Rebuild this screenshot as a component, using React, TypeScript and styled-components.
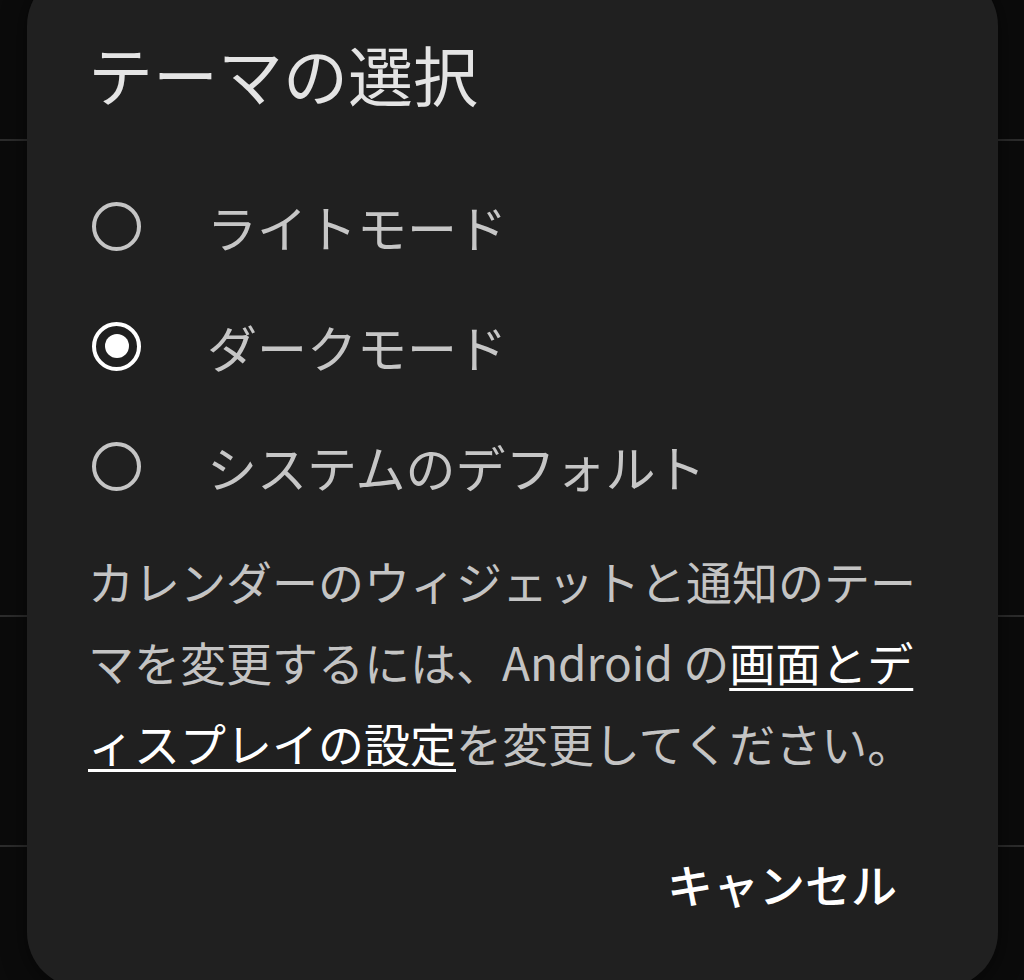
import React, { useState } from "react";
import styled, { createGlobalStyle } from "styled-components";

const Global = createGlobalStyle`
  html, body {
    margin: 0;
    padding: 0;
    background: #0b0b0b;
  }
  body {
    font-family: "Noto Sans CJK JP", "Noto Sans", sans-serif;
  }
`;

const Screen = styled.div`
  position: relative;
  width: 1024px;
  height: 980px;
  overflow: hidden;
  background: #0b0b0b;
`;

const BackgroundList = styled.div`
  display: flex;
  flex-direction: column;
`;

const BgRow = styled.div<{ $h: number }>`
  height: ${(p) => p.$h}px;
  border-bottom: 2px solid #2c2c2c;
  box-sizing: border-box;
`;

const Dialog = styled.div`
  position: absolute;
  top: -30px;
  left: 27px;
  width: 971px;
  height: 1018px;
  box-sizing: border-box;
  background: #202020;
  border-radius: 56px;
  padding: 65px 0 0 61px;
  display: flex;
  flex-direction: column;
  box-shadow: 0 4px 24px rgba(0, 0, 0, 0.5);
`;

const Title = styled.h1`
  margin: 0;
  font-size: 65px;
  line-height: 76px;
  font-weight: 400;
  color: #e4e4e4;
  white-space: nowrap;
`;

const Options = styled.div`
  margin-top: 55px;
  display: flex;
  flex-direction: column;
`;

const Option = styled.label`
  height: 120px;
  display: flex;
  align-items: center;
  cursor: pointer;
`;

const Radio = styled.span<{ $checked: boolean }>`
  width: 49px;
  height: 49px;
  margin-left: 4px;
  box-sizing: border-box;
  border-radius: 50%;
  border: 4px solid ${(p) => (p.$checked ? "#ffffff" : "#c4c4c4")};
  flex: none;
  display: flex;
  align-items: center;
  justify-content: center;

  &::after {
    content: "";
    display: ${(p) => (p.$checked ? "block" : "none")};
    width: 24px;
    height: 24px;
    border-radius: 50%;
    background: #ffffff;
  }
`;

const OptionLabel = styled.span`
  margin-left: 66px;
  font-size: 50px;
  line-height: 60px;
  color: #c6c6c6;
  white-space: nowrap;
`;

const Description = styled.p`
  margin: 14px 0 0;
  font-size: 46px;
  line-height: 81px;
  color: #c4c4c4;
  white-space: nowrap;
`;

const Link = styled.a`
  color: #ffffff;
  text-decoration: underline;
  text-decoration-thickness: 3px;
  text-underline-offset: 7px;
`;

const Footer = styled.div`
  margin-top: 70px;
  display: flex;
  justify-content: flex-end;
  padding-right: 101px;
`;

const TextButton = styled.button`
  background: none;
  border: none;
  padding: 0;
  font-family: inherit;
  font-size: 46px;
  line-height: 60px;
  font-weight: 500;
  color: #ffffff;
  cursor: pointer;
`;

const options = ["ライトモード", "ダークモード", "システムのデフォルト"];

export default function App() {
  const [selected, setSelected] = useState(1);
  return (
    <>
      <Global />
      <Screen>
        <BackgroundList>
          <BgRow $h={141} />
          <BgRow $h={476} />
          <BgRow $h={230} />
        </BackgroundList>
        <Dialog role="dialog">
          <Title>テーマの選択</Title>
          <Options>
            {options.map((o, i) => (
              <Option key={o} onClick={() => setSelected(i)}>
                <Radio $checked={selected === i} />
                <OptionLabel>{o}</OptionLabel>
              </Option>
            ))}
          </Options>
          <Description>
            カレンダーのウィジェットと通知のテー
            <br />
            マを変更するには、Android の<Link>画面とデ<br />ィスプレイの設定</Link>を変更してください。
          </Description>
          <Footer>
            <TextButton>キャンセル</TextButton>
          </Footer>
        </Dialog>
      </Screen>
    </>
  );
}
